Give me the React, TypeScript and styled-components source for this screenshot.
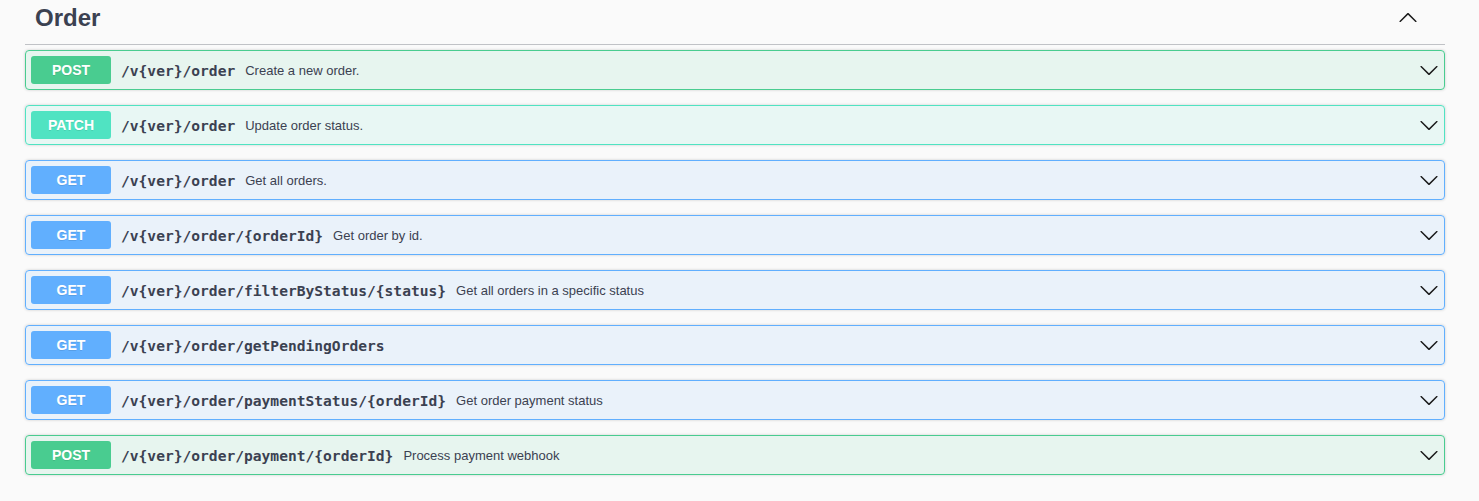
import React from "react";
import styled, { createGlobalStyle } from "styled-components";

const Global = createGlobalStyle`
  html, body { margin: 0; padding: 0; background: #fafafa; }
  body { font-family: "Liberation Sans", Arial, sans-serif; color: #3b4151; }
`;

type Method = "POST" | "PATCH" | "GET";

const palette: Record<Method, { main: string; bg: string }> = {
  POST: { main: "#49cc90", bg: "rgba(73,204,144,.1)" },
  PATCH: { main: "#50e3c2", bg: "rgba(80,227,194,.1)" },
  GET: { main: "#61affe", bg: "rgba(97,175,254,.1)" },
};

const Page = styled.div`
  padding: 0 34px 20px 25px;
`;

const TagHeader = styled.div`
  display: flex;
  align-items: center;
  justify-content: space-between;
  height: 44px;
  padding: 0 27px 0 10px;
  border-bottom: 1px solid rgba(59, 65, 81, 0.3);
  margin-bottom: 5px;
`;

const TagTitle = styled.h3`
  margin: 0;
  font-family: "Liberation Sans", Arial, sans-serif;
  font-size: 24px;
  font-weight: 700;
  color: #3b4151;
  position: relative;
  top: -4px;
`;

const TagToggle = styled.span`
  display: flex;
  position: relative;
  top: -4px;
`;

const List = styled.div`
  display: flex;
  flex-direction: column;
  gap: 15px;
`;

const Block = styled.div<{ $m: Method }>`
  display: flex;
  align-items: center;
  height: 38px;
  padding: 0 5px;
  border: 1px solid ${(p) => palette[p.$m].main};
  background: ${(p) => palette[p.$m].bg};
  border-radius: 4px;
  box-shadow: 0 0 3px rgba(0, 0, 0, 0.19);
`;

const Badge = styled.span<{ $m: Method }>`
  flex: none;
  width: 80px;
  height: 28px;
  display: flex;
  align-items: center;
  justify-content: center;
  background: ${(p) => palette[p.$m].main};
  color: #fff;
  font-family: "Liberation Sans", Arial, sans-serif;
  font-size: 14px;
  font-weight: 700;
  border-radius: 3px;
  text-shadow: 0 1px 0 rgba(0, 0, 0, 0.1);
`;

const Path = styled.span`
  padding: 0 10px;
  font-family: "DejaVu Sans Mono", monospace;
  font-size: 14.6px;
  font-weight: 700;
  color: #3b4151;
  white-space: nowrap;
`;

const Desc = styled.span`
  flex: 1;
  font-family: "Liberation Sans", Arial, sans-serif;
  font-size: 13px;
  color: #3b4151;
`;

const Arrow = ({ up }: { up?: boolean }) => (
  <svg
    width="20"
    height="20"
    viewBox="0 0 20 20"
    style={up ? { transform: "rotate(180deg)" } : undefined}
  >
    <path
      fill="#1a1a1a"
      d="M17.418 6.109c.272-.268.709-.268.979 0s.271.701 0 .969l-7.908 7.83c-.27.268-.707.268-.979 0l-7.908-7.830c-.27-.268-.27-.701 0-.969.271-.268.709-.268.979 0L10 13.25l7.418-7.141z"
    />
  </svg>
);

const ops: { m: Method; path: string; desc: string }[] = [
  { m: "POST", path: "/v{ver}/order", desc: "Create a new order." },
  { m: "PATCH", path: "/v{ver}/order", desc: "Update order status." },
  { m: "GET", path: "/v{ver}/order", desc: "Get all orders." },
  { m: "GET", path: "/v{ver}/order/{orderId}", desc: "Get order by id." },
  {
    m: "GET",
    path: "/v{ver}/order/filterByStatus/{status}",
    desc: "Get all orders in a specific status",
  },
  { m: "GET", path: "/v{ver}/order/getPendingOrders", desc: "" },
  {
    m: "GET",
    path: "/v{ver}/order/paymentStatus/{orderId}",
    desc: "Get order payment status",
  },
  {
    m: "POST",
    path: "/v{ver}/order/payment/{orderId}",
    desc: "Process payment webhook",
  },
];

export default function App() {
  return (
    <Page>
      <Global />
      <TagHeader>
        <TagTitle>Order</TagTitle>
        <TagToggle>
          <Arrow up />
        </TagToggle>
      </TagHeader>
      <List>
        {ops.map((o, i) => (
          <Block key={i} $m={o.m}>
            <Badge $m={o.m}>{o.m}</Badge>
            <Path>{o.path}</Path>
            <Desc>{o.desc}</Desc>
            <Arrow />
          </Block>
        ))}
      </List>
    </Page>
  );
}
